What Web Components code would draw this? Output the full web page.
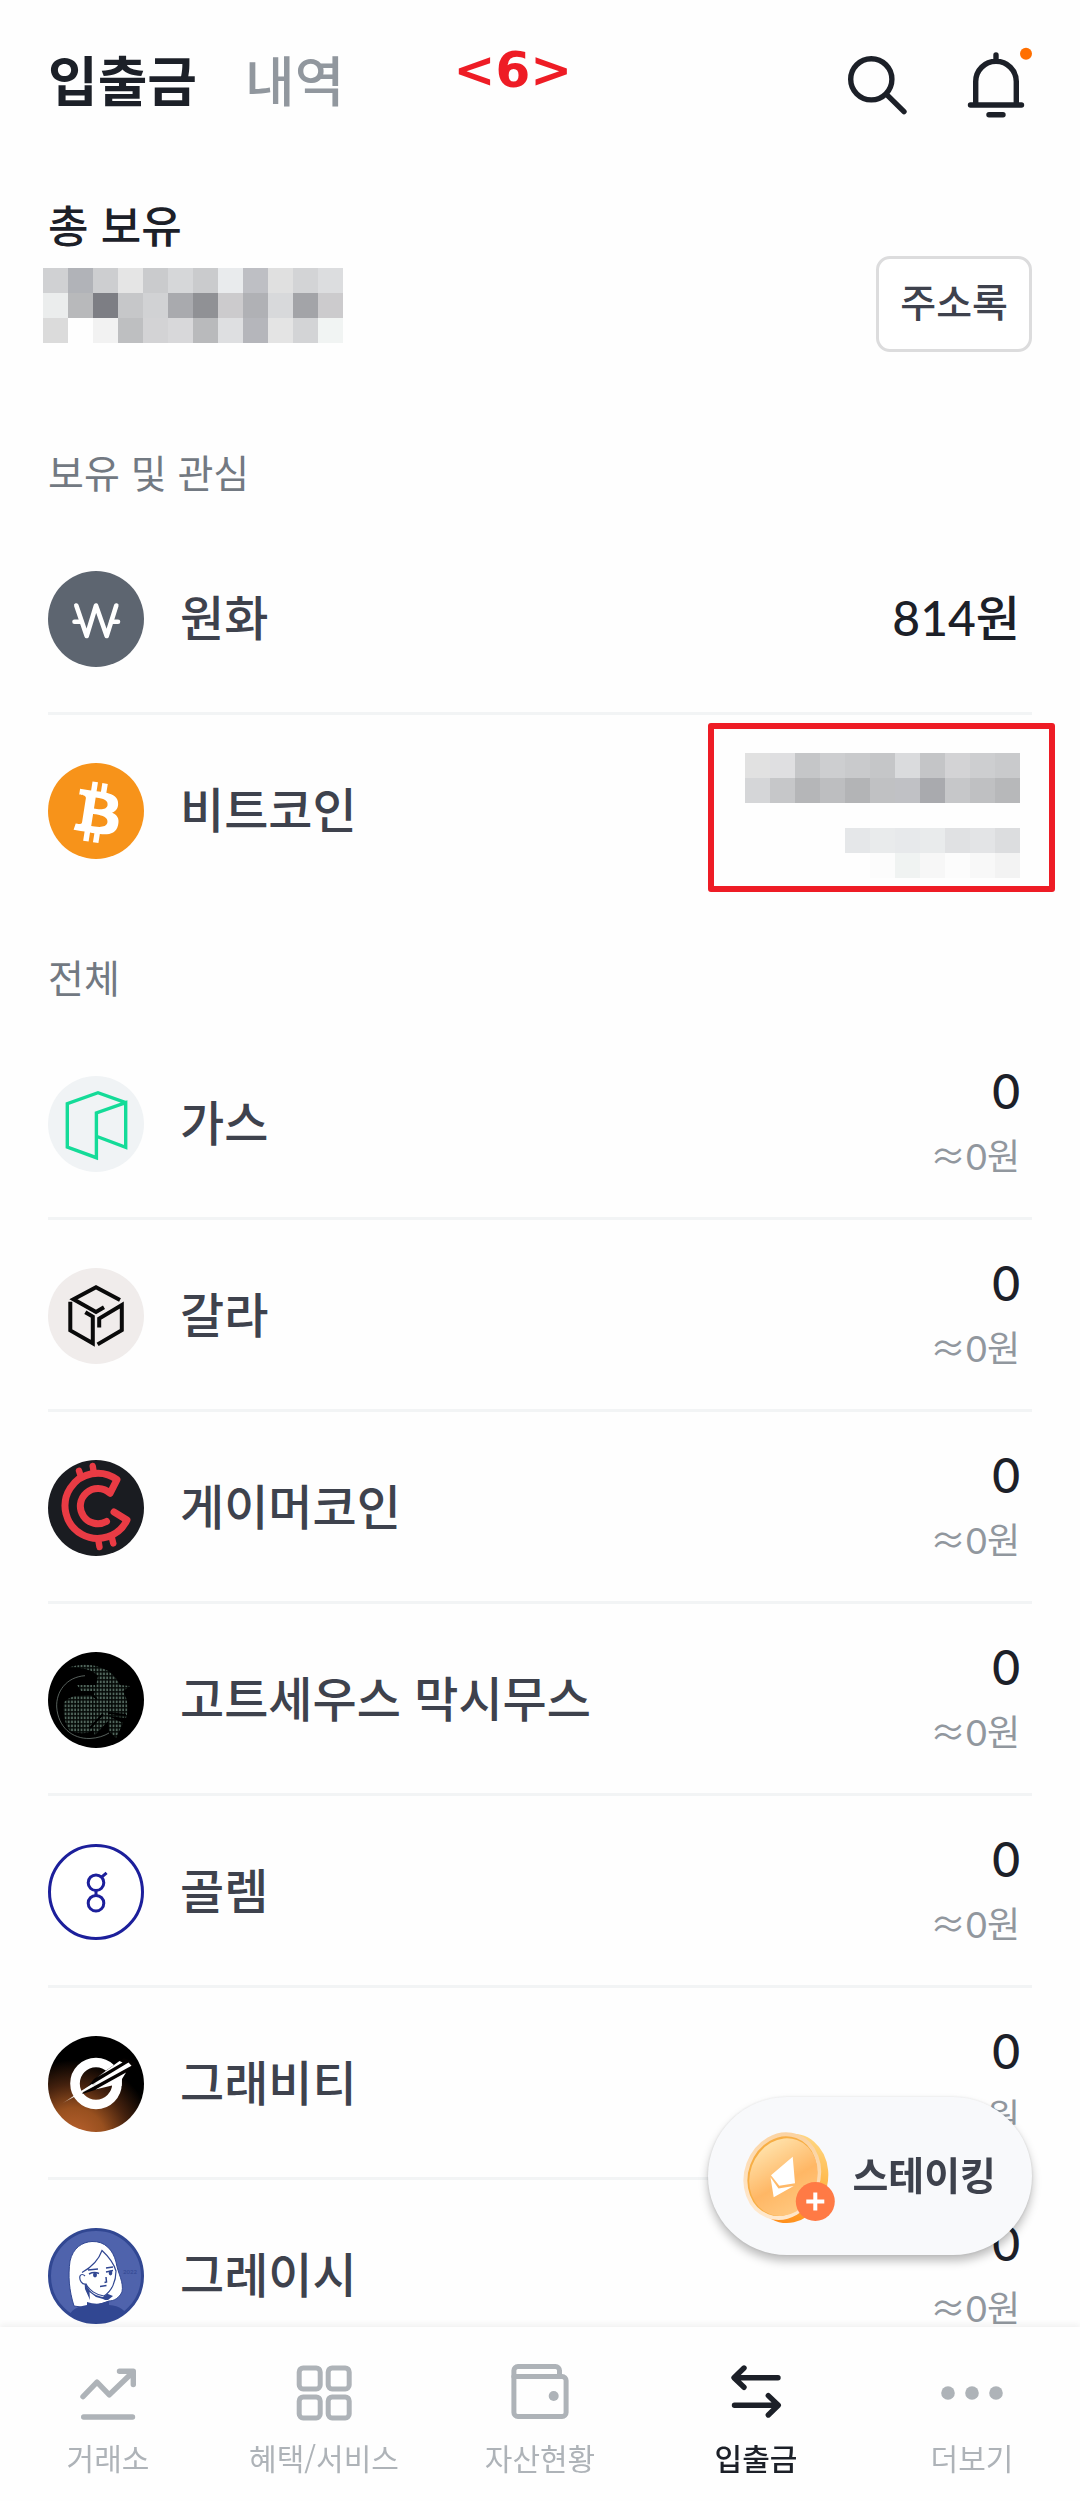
<!DOCTYPE html>
<html lang="ko">
<head>
<meta charset="utf-8">
<meta name="viewport" content="width=device-width, initial-scale=1">
<title>입출금</title>
<style>
  body {
    margin: 0;
    background: #fefefe;
    color: #3e424d;
    font-family: "Noto Sans CJK KR", sans-serif;
    font-weight: 500;
  }
</style>
</head>
<body>
<wallet-app>
  <wallet-header slot="header">
    <a href="#transfer" aria-current="page">입출금</a>
    <a href="#history">내역</a>
    <span slot="note">&lt;6&gt;</span>
  </wallet-header>

  <total-balance label="총 보유" action="주소록">
    <pixel-mask rows="d0d1d3 b1b3b8 cdced0 e5e5e5 cacbcd d6d7d9 cacbcd e9ebed bebfc4 e0e0e0 d3d4d6 dcdddf,ebeded b8b9bb 7d7e84 c6c7c9 d1d2d4 a9aaae 909195 cccbcd b0b1b5 d8d9db a3a4a8 cccbcd,dbdbdb fefefe f2f2f2 bebfc1 d3d3d5 d8d8da b9babc dedfe1 b5b6bb e4e4e4 d3d4d6 f1f4f3"></pixel-mask>
  </total-balance>

  <asset-list label="보유 및 관심">
    <asset-row coin="krw" name="원화" amount="814원"></asset-row>
    <asset-row coin="btc" name="비트코인">
      <pixel-mask marked rows="e1e1e1 dfdfe1 c5c6c8 cdced0 c9cacc c5c6c8 dadbdd c4c5c7 d3d3d5 cdced0 c9cacc,d5d6d8 c6c7c9 b5b6b8 bdbec0 b3b4b6 c0c1c3 c0c1c5 a9aaae c6c7c9 bfc0c2 b7b8ba,,- - - - e5e7e9 e9ebec e7e9eb e9ebec e0e1e3 e3e4e6 dcdddf,- - - - - fcfcfc f0f3f2 f7f7f7 fcfcfc f8f8f8 f3f3f3"></pixel-mask>
    </asset-row>
  </asset-list>

  <asset-list label="전체">
    <asset-row coin="gas" name="가스" amount="0" worth="≈0원"></asset-row>
    <asset-row coin="gala" name="갈라" amount="0" worth="≈0원"></asset-row>
    <asset-row coin="ghx" name="게이머코인" amount="0" worth="≈0원"></asset-row>
    <asset-row coin="goat" name="고트세우스 막시무스" amount="0" worth="≈0원"></asset-row>
    <asset-row coin="glm" name="골렘" amount="0" worth="≈0원"></asset-row>
    <asset-row coin="g" name="그래비티" amount="0" worth="≈0원"></asset-row>
    <asset-row coin="gracy" name="그레이시" amount="0" worth="≈0원"></asset-row>
  </asset-list>

  <staking-button slot="floating">스테이킹</staking-button>

  <tab-bar slot="footer">
    <tab-item icon="chart" href="#market">거래소</tab-item>
    <tab-item icon="grid" href="#benefits">혜택/서비스</tab-item>
    <tab-item icon="wallet" href="#assets">자산현황</tab-item>
    <tab-item icon="transfer" href="#transfer" active>입출금</tab-item>
    <tab-item icon="more" href="#more">더보기</tab-item>
  </tab-bar>
</wallet-app>

<script>
(function() {
  // coin logos, all on a 96 x 96 canvas
  const COINS = {
    krw: `
      <circle cx="48" cy="48" r="48" fill="#5d6570"/>
      <g fill="none" stroke="#fff" stroke-width="4.6" stroke-linecap="round" stroke-linejoin="round">
        <path d="M28.3 34.5 38.7 65 48 34.5 58.7 65 68.3 34.5"/>
        <path d="M26.5 50.7H33M63.5 50.7H70"/>
      </g>`,
    btc: `
      <circle cx="48" cy="48" r="48" fill="#f7931a"/>
      <path fill="#fff" transform="rotate(-5 48 48) scale(3.1) translate(-.4 -.1)" d="M23.189 14.02c.314-2.096-1.283-3.223-3.465-3.975l.708-2.84-1.728-.43-.69 2.765c-.454-.114-.92-.22-1.385-.326l.695-2.783L15.596 6l-.708 2.839c-.376-.086-.746-.17-1.104-.26l.002-.009-2.384-.595-.46 1.846s1.283.294 1.256.312c.7.175.826.638.805 1.006l-.806 3.235-.003.012-1.13 4.532c-.086.212-.303.531-.793.41.018.025-1.256-.313-1.256-.313l-.858 1.978 2.25.561c.418.105.828.215 1.231.318l-.715 2.872 1.727.43.708-2.84c.472.127.93.245 1.378.357l-.706 2.828 1.728.43.715-2.866c2.948.558 5.164.333 6.097-2.333.752-2.146-.037-3.385-1.588-4.192 1.13-.26 1.98-1.003 2.207-2.538zm-3.95 5.538c-.533 2.147-4.148.986-5.32.695l.95-3.805c1.172.293 4.929.872 4.37 3.11zm.535-5.569c-.487 1.953-3.495.96-4.47.717l.86-3.45c.975.243 4.118.696 3.61 2.733z"/>`,
    gas: `
      <circle cx="48" cy="48" r="48" fill="#f0f3f5"/>
      <path fill="none" stroke="#14db98" stroke-width="3.4" d="M77.7 26.6 50 16.7 19.3 27.7V71L48.4 81.7V37L77.7 26.6V71.3L49 60.5"/>`,
    gala: `
      <circle cx="48" cy="48" r="48" fill="#f0eceb"/>
      <g fill="none" stroke="#0a0a0a" stroke-width="4">
        <path d="M72 32 48 19.3 25.5 31.2 48 44 56 39.3"/>
        <path d="M22.3 33.8V62.4L44.8 75.2V48.6L37.3 44.2"/>
        <path d="M51.2 59.6V50.6L73.8 37V62.2L49.6 76.4"/>
      </g>`,
    ghx: `
      <circle cx="48" cy="48" r="48" fill="#1a1c21"/>
      <g fill="none" stroke="#e93b44" stroke-width="7" stroke-linecap="round" stroke-linejoin="round">
        <path d="M58.5 61.5A17.6 17.6 0 1 1 62 33.3L69 19.6A32.6 32.6 0 1 0 79 60L66 52"/>
        <path d="M31 10.7 33 17M44.7 6 45.7 12M50.3 80 51.5 87M63.7 77 65.3 83.5" stroke-width="6.4"/>
      </g>`,
    goat: `
      <defs>
        <pattern id="dots" width="3.2" height="4" patternUnits="userSpaceOnUse">
          <rect width="3.2" height="4" fill="#050907"/>
          <rect x=".6" y=".6" width="1.8" height="2.5" fill="#52675d"/>
        </pattern>
      </defs>
      <circle cx="48" cy="48" r="48" fill="#000"/>
      <g fill="url(#dots)">
        <path d="M16 50C24 43 34 41 46 43L50 24C44 17 32 15 20 16 32 11 46 12 56 17 64 20 69 27 72 33L82 34 75 39C80 48 81 57 78 66L60 64 75 71 68 86 61 79 60 69 47 83 45 78C38 83 29 81 22 79 16 71 15 60 16 50Z"/>
        <path d="M29 33H47L50 39H33Z"/>
      </g>
      <path fill="none" stroke="#000" stroke-width="2" d="M27 43 43 42 49 47M55 62 42 76M60 61 78 63"/>
      <path fill="none" stroke="#7d8a84" stroke-width=".7" d="M37 23.7C18 25 8 40 8.7 55 10 75 24 87 42 86.5 50 86 56 84 61 81"/>`,
    glm: `
      <g fill="none" stroke="#1c1f9b" stroke-width="3">
        <circle cx="48" cy="48" r="46.5" fill="#fff"/>
        <circle cx="48" cy="38.7" r="7.8"/>
        <circle cx="48" cy="59.2" r="7.8"/>
        <path d="M48 46.5V51.4M53.6 33.2 58.6 28.8"/>
      </g>`,
    g: `
      <defs>
        <radialGradient id="glow" gradientUnits="userSpaceOnUse" cx="26" cy="104" r="80">
          <stop offset="0" stop-color="#bd6330"/>
          <stop offset=".4" stop-color="#98501f"/>
          <stop offset=".7" stop-color="#44210e"/>
          <stop offset="1" stop-color="#000"/>
        </radialGradient>
        <linearGradient id="streak" x1="0" x2="1"><stop offset="0" stop-color="#fff" stop-opacity=".1"/><stop offset=".35" stop-color="#fff"/></linearGradient>
      </defs>
      <circle cx="48" cy="48" r="48" fill="url(#glow)"/>
      <circle cx="48" cy="47.5" r="21" fill="none" stroke="#fff" stroke-width="9.6"/>
      <path fill="#050201" d="M46 43 76 22 88 27 78 37 60 50 34 58Z"/>
      <g fill="url(#streak)">
        <path d="M48 42 71.5 25 74.5 26.5Z"/>
        <path d="M30 57 80.5 26.5 83.5 29.8 33 57.5Z"/>
        <path d="M14 67.5 44 48 46 50Z"/>
      </g>
      <path fill="#fff" d="M47.5 53.5 78 36.5 74 43 73.6 50 64 49.5Z"/>`,
    gracy: `
      <defs><clipPath id="disc"><circle cx="48" cy="48" r="46.5"/></clipPath></defs>
      <circle cx="48" cy="48" r="46.5" fill="#4f63ac" stroke="#314792" stroke-width="3"/>
      <g clip-path="url(#disc)">
        <path fill="#fff" stroke="#314792" stroke-width="1" d="M26 78C21 62 20 48 22 33 25 20 34 14 44 13.5 57 13 65 22 68 34 70 46 76 54 74 64 71 70 66 73 61 73L40 80Z"/>
        <path fill="#314792" d="M36 47 37 61 42 72 60 72 65 68 60 66 42 61Z"/>
        <path fill="#fff" d="M36 44C32 44 30 48 32 52 33 56 36 57 38 56 41 64 48 68 55 69 62 65 67 56 68 43 65 34 60 28 54 23 50 31 44 37 37 40Z"/>
        <path fill="#fff" d="M41.5 64 48 69 55 71 59 73 42 74Z"/>
        <path fill="none" stroke="#314792" stroke-width="1.2" d="M34 44.5C44 39 51 31 54 22.5 60 28 66 36 68 43 68 53 64 63 56 68 48 67 41 62 38 56 34 57 31 52 32 48 33 46 35 46 37 48"/>
        <path fill="none" stroke="#314792" stroke-width="1.5" d="M41 46Q46 43.5 51 45.5M58 44 65 42.5M40 42 50 41M58 40 65 39M58 49 58.5 54 56.5 54.5M52 58.5 58.5 57.5"/>
        <ellipse cx="47" cy="47" rx="2" ry="2.4" fill="#314792"/>
        <ellipse cx="62.5" cy="45" rx="1.8" ry="2.4" fill="#314792"/>
        <path fill="#314792" d="M19 96C20 85 25 79 39 77V74Q50 78 61 73V77C72 78 78 82 80 90L78 96Z"/>
        <text x="75" y="45.5" font-family="Lato, sans-serif" font-size="6" font-weight="700" fill="#394e98">2022</text>
      </g>`
  };

  // line icons on a 72 x 72 canvas
  const ICONS = {
    search: `<circle cx="31.3" cy="30.3" r="20.6"/><path d="M46.5 45.3 64 62.7"/>`,
    bell: `<path d="M15.7 56V32.6a20.3 20.3 0 0 1 40.6 0V56M36 6V11M10.5 56H61.5"/><path d="M29 65.8H43"/><circle cx="66" cy="4.7" r="6" fill="#ff6f00" stroke="none"/>`,
    chart: `<path d="M11 39.6 25 25.2 37.3 37.8 61 15M47.5 14.3H61.3V27.5M11.7 60H60.5"/>`,
    grid: `<g stroke-width="5"><rect x="11.2" y="10.9" width="21" height="21" rx="4"/><rect x="40.2" y="10.9" width="21" height="21" rx="4"/><rect x="11.2" y="39.9" width="21" height="21" rx="4"/><rect x="40.2" y="39.9" width="21" height="21" rx="4"/></g>`,
    wallet: `<g stroke-width="5"><path d="M9.9 19.6V13.6a4 4 0 0 1 4-4H51.5a4 4 0 0 1 4 4V19.6"/><path d="M9.9 19.6H58.1a4 4 0 0 1 4 4V55.4a4 4 0 0 1-4 4H13.9a4 4 0 0 1-4-4Z"/></g><circle cx="49.7" cy="39" r="5" fill="currentColor" stroke="none"/>`,
    transfer: `<path d="M24 11 14 20.7 24 30.3M14.5 20.7H58M48.3 38.6 58.3 48.3 48.3 58M14.5 48.3H58"/>`,
    more: `<g fill="currentColor" stroke="none"><circle cx="12" cy="36" r="6.8"/><circle cx="36" cy="36" r="6.8"/><circle cx="60" cy="36" r="6.8"/></g>`
  };

  function lineIcon(name) {
    return `<svg viewBox="0 0 72 72" width="72" height="72" fill="none" stroke="currentColor" stroke-width="5.4" stroke-linecap="round" stroke-linejoin="round" overflow="visible" aria-hidden="true">${ICONS[name]}</svg>`;
  }

  class WalletApp extends HTMLElement {
    constructor() {
      super();
      this.attachShadow({ mode: "open" }).innerHTML = `
        <style>
          :host { display: block; min-height: 100vh; }
          main { padding: 0 48px; }
        </style>
        <slot name="header"></slot>
        <main><slot></slot></main>
        <slot name="floating"></slot>
        <slot name="footer"></slot>`;
    }
  }

  class WalletHeader extends HTMLElement {
    constructor() {
      super();
      this.attachShadow({ mode: "open" }).innerHTML = `
        <style>
          :host {
            display: flex;
            position: relative;
            align-items: flex-start;
            justify-content: space-between;
            height: 144px;
            padding: 49px 48px 0;
            box-sizing: border-box;
            color: #1c2028;
          }
          nav, .tools { display: flex; gap: 48px; }
          ::slotted(a) {
            color: #91979e;
            font-size: 54px;
            line-height: 60px;
            font-weight: 500;
            text-decoration: none;
          }
          ::slotted(a[aria-current]) { color: #1c2028; font-weight: 700; }
          .note {
            position: absolute;
            top: 40px;
            left: 42%;
            color: #ee1c25;
            font: 700 50px/60px "DejaVu Sans", sans-serif;
          }
          button { padding: 0; border: 0; background: none; color: inherit; }
          svg { display: block; }
        </style>
        <nav><slot></slot></nav>
        <div class="note"><slot name="note"></slot></div>
        <div class="tools">
          <button type="button" aria-label="검색">${lineIcon("search")}</button>
          <button type="button" aria-label="알림">${lineIcon("bell")}</button>
        </div>`;
    }
  }

  class TotalBalance extends HTMLElement {
    connectedCallback() {
      this.attachShadow({ mode: "open" }).innerHTML = `
        <style>
          :host {
            display: flex;
            justify-content: space-between;
            align-items: flex-end;
            height: 208px;
            box-sizing: border-box;
            margin-bottom: 50px;
            padding-top: 48px;
          }
          h1 {
            margin: 0 0 12px;
            color: #1c2028;
            font-size: 44px;
            line-height: 64px;
            font-weight: 500;
          }
          .held { align-self: flex-start; }
          ::slotted(*) { margin-left: -5px; }
          button {
            height: 96px;
            padding: 0 21px 8px;
            border: 3px solid #dcdcdd;
            border-radius: 14px;
            background: #fff;
            color: #3e424d;
            font: 500 39px/56px "Noto Sans CJK KR", sans-serif;
          }
        </style>
        <div class="held"><h1>${this.getAttribute("label")}</h1><slot></slot></div>
        <button type="button">${this.getAttribute("action")}</button>`;
    }
  }

  /**
   * rows     comma separated rows of hex colours, "-" leaves a cell empty
   * marked   puts a red frame round the mask
   */
  class PixelMask extends HTMLElement {
    connectedCallback() {
      const cell = 25;
      const rows = this.getAttribute("rows").split(",").map(r => r.split(" ").filter(Boolean));
      const width = Math.max(...rows.map(r => r.length)) * cell;
      const height = rows.length * cell;
      const rects = rows.map((row, y) => row.map((c, x) =>
        c === "-" ? "" : `<rect x="${x * cell}" y="${y * cell}" width="${cell}" height="${cell}" fill="#${c}"/>`
      ).join("")).join("");
      this.attachShadow({ mode: "open" }).innerHTML = `
        <style>
          :host { display: block; position: relative; }
          :host([marked])::after {
            content: "";
            position: absolute;
            inset: -30px -35px -14px -37px;
            border: 6px solid #ee1c25;
            border-radius: 3px;
          }
          svg { display: block; }
        </style>
        <svg width="${width}" height="${height}" shape-rendering="crispEdges" aria-hidden="true">${rects}</svg>`;
    }
  }

  class AssetList extends HTMLElement {
    connectedCallback() {
      this.attachShadow({ mode: "open" }).innerHTML = `
        <style>
          :host { display: block; }
          h2 {
            margin: 0;
            padding: 41px 0 24px;
            color: #727982;
            font-size: 39px;
            line-height: 56px;
            font-weight: 400;
          }
          ::slotted(asset-row:not(:last-child)) { box-shadow: inset 0 -3px #f2f4f5; }
        </style>
        <section>
          <h2>${this.getAttribute("label")}</h2>
          <div role="list"><slot></slot></div>
        </section>`;
    }
  }

  /**
   * coin     key of the logo
   * name     asset name
   * amount   amount held
   * worth    value in won, shown under the amount
   */
  class AssetRow extends HTMLElement {
    connectedCallback() {
      const amount = this.getAttribute("amount");
      const worth = this.getAttribute("worth");
      this.setAttribute("role", "listitem");
      this.attachShadow({ mode: "open" }).innerHTML = `
        <style>
          :host {
            display: flex;
            align-items: center;
            gap: 36px;
            height: 192px;
            padding-right: 12px;
            box-sizing: border-box;
          }
          svg { flex: none; display: block; }
          .name { flex: 1; padding-bottom: 8px; font-size: 48px; line-height: 64px; }
          .values { display: grid; gap: 8px; justify-items: end; padding-bottom: 8px; }
          .amount { color: #1c2028; font-size: 48px; line-height: 60px; }
          .worth { color: #91979e; font-size: 36px; line-height: 56px; font-weight: 400; }
          .num { font-family: Lato, sans-serif; line-height: 1; }
          ::slotted(*) { margin-top: 17px; }
        </style>
        <svg viewBox="0 0 96 96" width="96" height="96" aria-hidden="true">${COINS[this.getAttribute("coin")]}</svg>
        <span class="name">${this.getAttribute("name")}</span>
        <div class="values">
          ${amount ? `<span class="amount">${this.figures(amount)}</span>` : "<slot></slot>"}
          ${worth ? `<span class="worth">${this.figures(worth)}</span>` : ""}
        </div>`;
    }

    figures(text) {
      return text.replace(/\d+/g, n => `<span class="num">${n}</span>`);
    }
  }

  class StakingButton extends HTMLElement {
    constructor() {
      super();
      this.attachShadow({ mode: "open" }).innerHTML = `
        <style>
          :host { position: fixed; right: 48px; bottom: 246px; display: block; }
          button {
            display: flex;
            align-items: center;
            gap: 14px;
            height: 158px;
            padding: 0 36px 0 34px;
            border: 0;
            border-radius: 79px;
            background: #f8f9fb;
            box-shadow: 0 6px 10px rgba(0, 0, 0, .26), 0 0 3px rgba(0, 0, 0, .1);
            color: #3e424d;
            font: 700 39px/56px "Noto Sans CJK KR", sans-serif;
          }
          span { padding-bottom: 6px; }
        </style>
        <button type="button">
          <svg viewBox="0 0 96 96" width="96" height="96" aria-hidden="true">
            <defs>
              <linearGradient id="rim" x1="0" y1="0" x2="0" y2="1"><stop offset="0" stop-color="#ffd680"/><stop offset=".6" stop-color="#ffb03b"/><stop offset="1" stop-color="#ff8f1c"/></linearGradient>
              <linearGradient id="face" x1="0" y1="0" x2="1" y2="1"><stop offset="0" stop-color="#ffefc0"/><stop offset=".55" stop-color="#ffb765"/><stop offset="1" stop-color="#ffcf8a"/></linearGradient>
              <linearGradient id="edge" x1="0" y1="0" x2="0" y2="1"><stop offset="0" stop-color="#fbd3a2"/><stop offset="1" stop-color="#ffe8cc"/></linearGradient>
            </defs>
            <ellipse cx="48" cy="50.5" rx="38" ry="45" transform="rotate(14 48 50)" fill="url(#rim)"/>
            <ellipse cx="40.3" cy="48" rx="36" ry="42.5" transform="rotate(20 40 48)" fill="#f7ae45" stroke="url(#edge)" stroke-width="4"/>
            <ellipse cx="41.5" cy="49" rx="33.5" ry="39.5" transform="rotate(20 41 49)" fill="url(#face)"/>
            <path fill="#fff" d="M50.7 28.7 53 55.3 37.3 57.7 29 47.3ZM28.5 49.3 36.5 60.5 51.7 57.9 31.7 69.3Z"/>
            <circle cx="73.3" cy="73.5" r="19.5" fill="#ff7a45"/>
            <path stroke="#fff" stroke-width="4" d="M64.3 73.5H82.3M73.3 64.5V82.5"/>
          </svg>
          <span><slot></slot></span>
        </button>`;
    }
  }

  class TabBar extends HTMLElement {
    constructor() {
      super();
      this.attachShadow({ mode: "open" }).innerHTML = `
        <style>
          :host {
            position: fixed;
            inset: auto 0 0;
            display: block;
            background: #fefefe;
            box-shadow: 0 -3px 6px rgba(0, 0, 0, .05);
          }
          nav {
            display: grid;
            grid-template-columns: repeat(5, 1fr);
            height: 174px;
          }
        </style>
        <nav><slot></slot></nav>`;
    }
  }

  class TabItem extends HTMLElement {
    connectedCallback() {
      this.attachShadow({ mode: "open" }).innerHTML = `
        <style>
          :host { display: block; color: #aeb3b8; font-weight: 400; }
          :host([active]) { color: #1c2028; font-weight: 500; }
          a {
            display: flex;
            flex-direction: column;
            align-items: center;
            gap: 8px;
            padding-top: 30px;
            color: inherit;
            font-size: 30px;
            line-height: 40px;
            white-space: nowrap;
            text-decoration: none;
          }
        </style>
        <a href="${this.getAttribute("href")}"${this.hasAttribute("active") ? ' aria-current="page"' : ""}>
          ${lineIcon(this.getAttribute("icon"))}
          <span><slot></slot></span>
        </a>`;
    }
  }

  customElements.define("wallet-app", WalletApp);
  customElements.define("wallet-header", WalletHeader);
  customElements.define("total-balance", TotalBalance);
  customElements.define("pixel-mask", PixelMask);
  customElements.define("asset-list", AssetList);
  customElements.define("asset-row", AssetRow);
  customElements.define("staking-button", StakingButton);
  customElements.define("tab-bar", TabBar);
  customElements.define("tab-item", TabItem);
})();
</script>
</body>
</html>
